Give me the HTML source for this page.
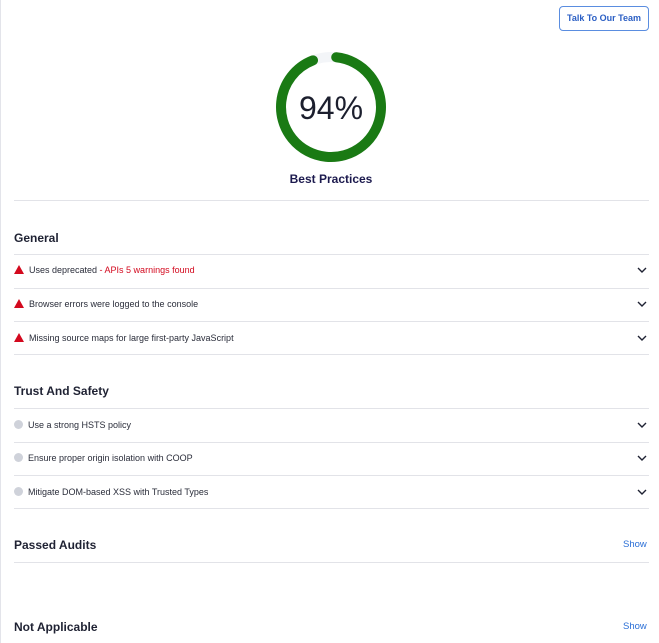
<!DOCTYPE html>
<html><head><style>
body{margin:0;width:659px;height:643px;background:#fff;font-family:"Liberation Sans",sans-serif;position:relative;overflow:hidden;color:#1f2233}
.lb{position:absolute;left:0;top:0;width:1px;height:643px;background:#e3e4ea}
.a{position:absolute}
.hr{position:absolute;left:14px;width:635px;height:1px;background:#e2e3e8}
.h{position:absolute;left:14px;font-size:12px;font-weight:bold;color:#1f2233;line-height:14px}
.r{position:absolute;left:14px;font-size:9px;line-height:12px;color:#2a2d3a}
.tri{display:inline-block;width:0;height:0;border-left:5px solid transparent;border-right:5px solid transparent;border-bottom:9px solid #d3091e;vertical-align:-1px;margin-right:5px}
.dot{display:inline-block;width:9px;height:9px;border-radius:50%;background:#cfd2da;vertical-align:-1px;margin-right:5px}
.chev{position:absolute;left:637px}
.show{position:absolute;left:623px;font-size:9.5px;color:#2b6fd6}
</style></head><body>
<div class="lb"></div>
<div class="a" style="left:559px;top:6px;width:90px;height:25px;border:1px solid #5a8de0;border-radius:4px;box-sizing:border-box;font-size:9px;font-weight:bold;color:#2b5fc4;text-align:center;line-height:23px">Talk To Our Team</div>
<svg class="a" style="left:271px;top:47px" width="120" height="120" viewBox="0 0 120 120">
<circle cx="60" cy="60" r="50" fill="none" stroke="#f3f5f8" stroke-width="10"/>
<circle cx="60" cy="60" r="50" fill="none" stroke="#1a7a14" stroke-width="10" stroke-linecap="round" stroke-dasharray="290 400" transform="rotate(-84 60 60)"/>
<text x="60" y="72" text-anchor="middle" font-family="Liberation Sans" font-size="32" fill="#1c1f2e">94%</text>
</svg>
<div class="a" style="left:260px;top:172px;width:142px;text-align:center;font-size:12px;font-weight:bold;color:#1c1a4e">Best Practices</div>
<div class="hr" style="top:200px"></div>

<div class="h" style="top:231px">General</div>
<div class="hr" style="top:254px"></div>
<div class="r" style="top:264px"><span class="tri"></span>Uses deprecated <span style="color:#d3091e">- APIs 5 warnings found</span></div>
<div class="hr" style="top:288px"></div>
<div class="r" style="top:298px"><span class="tri"></span>Browser errors were logged to the console</div>
<div class="hr" style="top:321px"></div>
<div class="r" style="top:332px"><span class="tri"></span>Missing source maps for large first-party JavaScript</div>
<div class="hr" style="top:354px"></div>

<div class="h" style="top:384px">Trust And Safety</div>
<div class="hr" style="top:408px"></div>
<div class="r" style="top:419px"><span class="dot"></span>Use a strong HSTS policy</div>
<div class="hr" style="top:442px"></div>
<div class="r" style="top:452px"><span class="dot"></span>Ensure proper origin isolation with COOP</div>
<div class="hr" style="top:475px"></div>
<div class="r" style="top:486px"><span class="dot"></span>Mitigate DOM-based XSS with Trusted Types</div>
<div class="hr" style="top:508px"></div>

<div class="h" style="top:538px">Passed Audits</div>
<div class="show" style="top:539px">Show</div>
<div class="hr" style="top:562px"></div>
<div class="h" style="top:620px">Not Applicable</div>
<div class="show" style="top:621px">Show</div>

<svg class="chev" style="top:266px" width="10" height="8" viewBox="0 0 10 8"><path d="M1 2 L5 6 L9 2" fill="none" stroke="#1f2233" stroke-width="1.4"/></svg>
<svg class="chev" style="top:300px" width="10" height="8" viewBox="0 0 10 8"><path d="M1 2 L5 6 L9 2" fill="none" stroke="#1f2233" stroke-width="1.4"/></svg>
<svg class="chev" style="top:334px" width="10" height="8" viewBox="0 0 10 8"><path d="M1 2 L5 6 L9 2" fill="none" stroke="#1f2233" stroke-width="1.4"/></svg>
<svg class="chev" style="top:421px" width="10" height="8" viewBox="0 0 10 8"><path d="M1 2 L5 6 L9 2" fill="none" stroke="#1f2233" stroke-width="1.4"/></svg>
<svg class="chev" style="top:454px" width="10" height="8" viewBox="0 0 10 8"><path d="M1 2 L5 6 L9 2" fill="none" stroke="#1f2233" stroke-width="1.4"/></svg>
<svg class="chev" style="top:488px" width="10" height="8" viewBox="0 0 10 8"><path d="M1 2 L5 6 L9 2" fill="none" stroke="#1f2233" stroke-width="1.4"/></svg>
</body></html>
